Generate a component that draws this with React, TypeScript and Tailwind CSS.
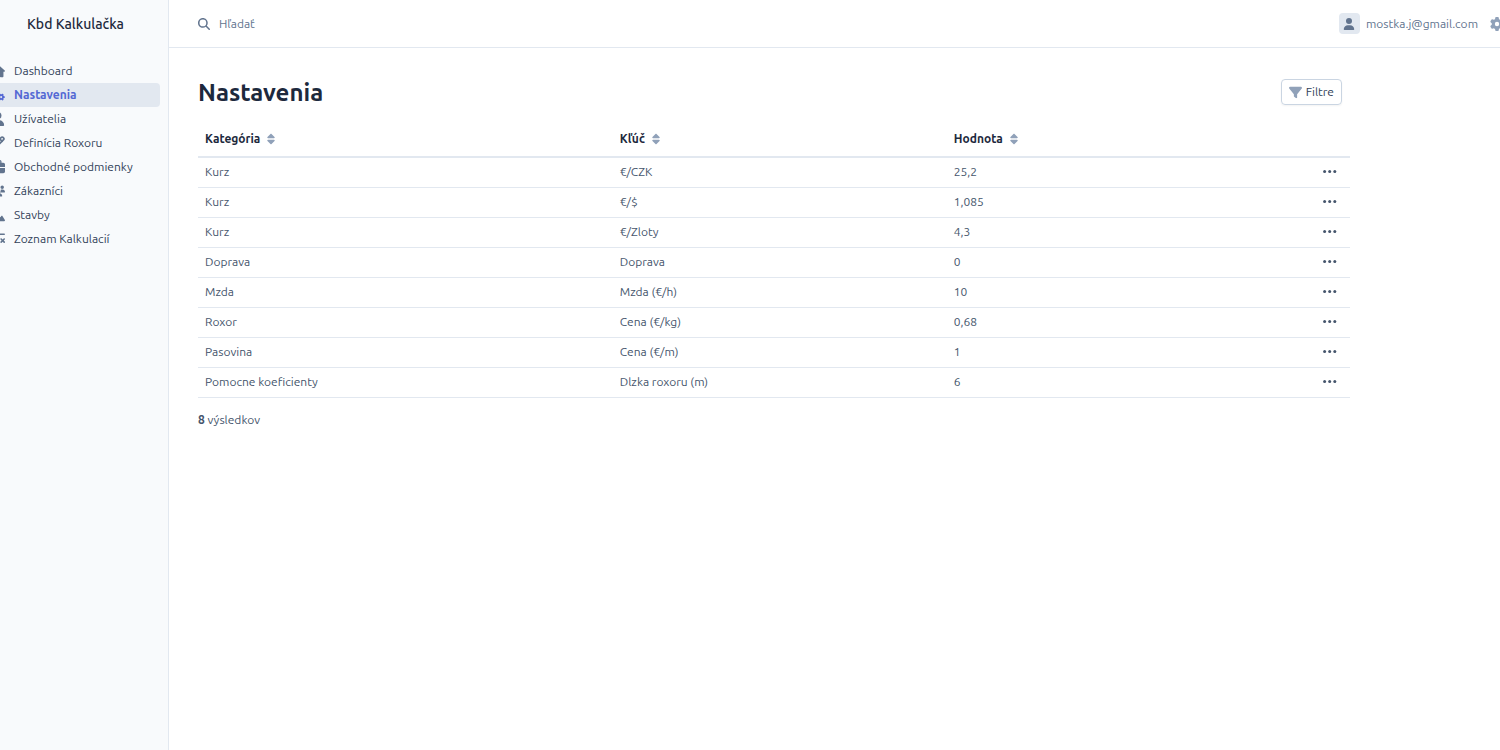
import { ReactNode } from 'react';
import { Pencil } from 'lucide-react';
import {
  FaBriefcase,
  FaFilter,
  FaGear,
  FaGears,
  FaHouse,
  FaMagnifyingGlass,
  FaPersonDigging,
  FaSort,
  FaSquareRootVariable,
  FaUser,
  FaUsers,
} from 'react-icons/fa6';

interface NavItem {
  label: string;
  icon: ReactNode;
  active?: boolean;
}

const iconSize = 'h-[14px] w-auto shrink-0';

const navItems: NavItem[] = [
  { label: 'Dashboard', icon: <FaHouse className={iconSize} /> },
  { label: 'Nastavenia', icon: <FaGears className={iconSize} />, active: true },
  { label: 'Užívatelia', icon: <FaUser className={iconSize} /> },
  { label: 'Definícia Roxoru', icon: <Pencil className={iconSize} strokeWidth={3} /> },
  { label: 'Obchodné podmienky', icon: <FaBriefcase className={iconSize} /> },
  { label: 'Zákazníci', icon: <FaUsers className={iconSize} /> },
  { label: 'Stavby', icon: <FaPersonDigging className={iconSize} /> },
  { label: 'Zoznam Kalkulacií', icon: <FaSquareRootVariable className={iconSize} /> },
];

const columns = [
  { label: 'Kategória', width: 'w-[36%]' },
  { label: 'Kľúč', width: 'w-[29%]' },
  { label: 'Hodnota', width: 'w-[25%]' },
];

const rows = [
  ['Kurz', '€/CZK', '25,2'],
  ['Kurz', '€/$', '1,085'],
  ['Kurz', '€/Zloty', '4,3'],
  ['Doprava', 'Doprava', '0'],
  ['Mzda', 'Mzda (€/h)', '10'],
  ['Roxor', 'Cena (€/kg)', '0,68'],
  ['Pasovina', 'Cena (€/m)', '1'],
  ['Pomocne koeficienty', 'Dlzka roxoru (m)', '6'],
];

function DotsIcon() {
  return (
    <svg width="16" height="16" viewBox="0 0 16 16" fill="currentColor" aria-hidden="true">
      <circle cx="2.6" cy="7.5" r="1.5" />
      <circle cx="7.7" cy="7.5" r="1.5" />
      <circle cx="12.8" cy="7.5" r="1.5" />
    </svg>
  );
}

function Sidebar() {
  return (
    <aside className="w-[169px] shrink-0 overflow-hidden border-r border-slate-200 bg-slate-50">
      <a href="#" className="block pt-3 pl-[27px] text-sm leading-6 font-medium text-slate-800">
        Kbd Kalkulačka
      </a>
      <nav className="mt-[23px] pr-2">
        <ul>
          {navItems.map((item) => (
            <li key={item.label}>
              <a
                href="#"
                className={`-ml-3 flex h-6 items-center rounded-sm text-xs ${
                  item.active ? 'bg-slate-200 font-semibold text-[#5468d4]' : 'text-slate-700'
                }`}
              >
                <span
                  className={`flex w-5 shrink-0 justify-center ${
                    item.active ? 'text-[#5468d4]' : 'text-slate-500'
                  }`}
                >
                  {item.icon}
                </span>
                <span className="ml-[6px] whitespace-nowrap">{item.label}</span>
              </a>
            </li>
          ))}
        </ul>
      </nav>
    </aside>
  );
}

function TopBar() {
  return (
    <header className="flex h-12 items-center border-b border-slate-200 pl-[29px] text-xs">
      <label htmlFor="search" aria-label="Hľadať" className="text-slate-500">
        <FaMagnifyingGlass className="size-3" />
      </label>
      <input
        id="search"
        type="search"
        placeholder="Hľadať"
        className="ml-[9px] min-w-0 flex-1 bg-transparent outline-none placeholder:text-slate-500"
      />
      <button type="button" className="flex shrink-0 items-center text-slate-500">
        <span className="mr-[6px] flex size-[21px] items-center justify-center rounded-sm bg-slate-200">
          <FaUser className="size-3" />
        </span>
        mostka.j@gmail.com
      </button>
      <button type="button" aria-label="Settings" className="-mr-1 ml-3 shrink-0 text-sm text-slate-400">
        <FaGear />
      </button>
    </header>
  );
}

function SettingsTable() {
  return (
    <table className="mt-3 w-full table-fixed text-left text-xs text-slate-600">
      <thead>
        <tr className="h-9 border-b-2 border-slate-200 text-slate-800">
          {columns.map((column) => (
            <th key={column.label} className={`${column.width} px-[7px] font-semibold`}>
              <button type="button" className="flex items-center gap-[5px]">
                {column.label}
                <FaSort className="size-3 text-slate-400" />
              </button>
            </th>
          ))}
          <th />
        </tr>
      </thead>
      <tbody>
        {rows.map((row) => (
          <tr key={row.join()} className="h-[30px] border-b border-slate-200">
            {row.map((cell, i) => (
              <td key={i} className="px-[7px]">
                {cell}
              </td>
            ))}
            <td className="pr-3">
              <button type="button" aria-label="Actions" className="ml-auto block text-slate-600">
                <DotsIcon />
              </button>
            </td>
          </tr>
        ))}
      </tbody>
    </table>
  );
}

export default function App() {
  return (
    <div className="flex min-h-screen bg-white font-['Ubuntu','Noto_Sans',sans-serif]">
      <Sidebar />
      <div className="min-w-0 flex-1">
        <TopBar />
        <main className="pt-[29px] pr-[150px] pl-[29px]">
          <div className="flex items-start justify-between pr-2">
            <h1 className="text-2xl font-bold text-slate-800">Nastavenia</h1>
            <button
              type="button"
              className="mt-0.5 flex h-[26px] items-center gap-1 rounded border border-slate-300 px-[7px] text-xs text-slate-700 shadow-xs"
            >
              <FaFilter className="size-[13px] text-slate-400" />
              Filtre
            </button>
          </div>
          <SettingsTable />
          <p className="mt-[14px] text-xs text-slate-600">
            <strong>8</strong> výsledkov
          </p>
        </main>
      </div>
    </div>
  );
}
